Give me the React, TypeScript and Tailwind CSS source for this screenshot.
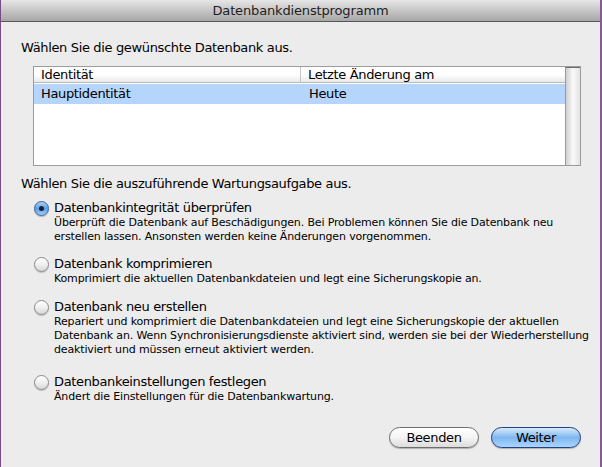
const options = [
  {
    title: "Datenbankintegrität überprüfen",
    desc: [
      "Überprüft die Datenbank auf Beschädigungen. Bei Problemen können Sie die Datenbank neu",
      "erstellen lassen. Ansonsten werden keine Änderungen vorgenommen.",
    ],
    checked: true,
    mt: "mt-[8px]",
  },
  {
    title: "Datenbank komprimieren",
    desc: ["Komprimiert die aktuellen Datenbankdateien und legt eine Sicherungskopie an."],
    checked: false,
    mt: "mt-[12px]",
  },
  {
    title: "Datenbank neu erstellen",
    desc: [
      "Repariert und komprimiert die Datenbankdateien und legt eine Sicherungskopie der aktuellen",
      "Datenbank an. Wenn Synchronisierungsdienste aktiviert sind, werden sie bei der Wiederherstellung",
      "deaktiviert und müssen erneut aktiviert werden.",
    ],
    checked: false,
    mt: "mt-[13px]",
  },
  {
    title: "Datenbankeinstellungen festlegen",
    desc: ["Ändert die Einstellungen für die Datenbankwartung."],
    checked: false,
    mt: "mt-[17px]",
  },
];

const Radio = ({ checked }: { checked: boolean }) =>
  checked ? (
    <span className="relative mt-[1px] h-[15px] w-[15px] shrink-0 rounded-full border border-[#3d5f95] bg-gradient-to-b from-[#a9d2fb] via-[#5a9fe8] to-[#9fd0ff] shadow-[0_1px_1px_rgba(0,0,0,0.25)]">
      <span className="absolute left-[4px] top-[4px] h-[5px] w-[5px] rounded-full bg-[#1b1f2a]" />
    </span>
  ) : (
    <span className="mt-[1px] h-[15px] w-[15px] shrink-0 rounded-full border border-[#8a8a8a] bg-gradient-to-b from-[#ffffff] via-[#f0f0f0] to-[#d6d6d6] shadow-[0_1px_1px_rgba(0,0,0,0.2)]" />
  );

const App = () => {
  return (
    <div
      className="flex h-[467px] w-[602px] flex-col overflow-hidden border-l border-r-2 border-l-[#7b4a86] border-r-[#8a5896] bg-[#ececec] tracking-[-0.35px] text-black"
      style={{ fontFamily: '"DejaVu Sans", "Liberation Sans", sans-serif' }}
    >
      {/* title bar */}
      <div className="flex h-[22px] shrink-0 items-center justify-center border-b border-[#565656] bg-gradient-to-b from-[#e6e6e6] to-[#a7a7a7] text-[13px] tracking-[-0.15px] text-[#1e1e1e]">
        Datenbankdienstprogramm
      </div>

      <div className="flex flex-1 flex-col pl-[20px]">
        <p className="mt-[18px] text-[13px] leading-[16px]">Wählen Sie die gewünschte Datenbank aus.</p>

        {/* table */}
        <div className="ml-[12px] mt-[10px] flex h-[100px] w-[548px] border border-[#9c9c9c] bg-white">
          <div className="flex flex-1 flex-col">
            <div className="flex h-[16px] border-b border-[#b9b9b9] bg-gradient-to-b from-white via-white to-[#e9e9e9] text-[13px] leading-[16px]">
              <div className="w-[267px] border-r border-[#c4c4c4] pl-[7px]">Identität</div>
              <div className="flex-1 pl-[7px]">Letzte Änderung am</div>
            </div>
            <div className="mt-[1px] flex h-[20px] items-center bg-[#b5d5fc] text-[13px]">
              <div className="w-[267px] pl-[7px]">Hauptidentität</div>
              <div className="flex-1 pl-[8px]">Heute</div>
            </div>
          </div>
          <div className="w-[15px] border-l border-t border-[#9a9a9a] border-t-[#6b6b6b] bg-gradient-to-r from-[#cfcfcf] via-[#fafafa] to-[#e2e2e2]" />
        </div>

        <p className="mt-[10px] text-[13px] leading-[16px]">Wählen Sie die auszuführende Wartungsaufgabe aus.</p>

        {options.map((o) => (
          <div key={o.title} className={`${o.mt} ml-[13px] flex gap-[5px]`}>
            <Radio checked={o.checked} />
            <div>
              <div className="text-[13px] leading-[16px]">{o.title}</div>
              {o.desc.map((d) => (
                <div key={d} className="whitespace-nowrap text-[11px] leading-[14px] tracking-[-0.15px]">
                  {d}
                </div>
              ))}
            </div>
          </div>
        ))}

        <div className="mt-auto mb-[19px] mr-[19px] flex justify-end gap-[12px]">
          <button className="h-[21px] w-[90px] rounded-full border border-[#6e6e6e] bg-gradient-to-b from-white via-[#f4f4f4] to-[#dcdcdc] text-[13px] leading-[19px] shadow-[0_1px_1px_rgba(0,0,0,0.25)]">
            Beenden
          </button>
          <button className="h-[21px] w-[90px] rounded-full border border-[#243f86] bg-gradient-to-b from-[#d6eafd] via-[#7fb7ef] to-[#a9d6fd] text-[13px] leading-[19px] shadow-[0_1px_1px_rgba(0,0,0,0.25)]">
            Weiter
          </button>
        </div>
      </div>
    </div>
  );
};

export default App;
